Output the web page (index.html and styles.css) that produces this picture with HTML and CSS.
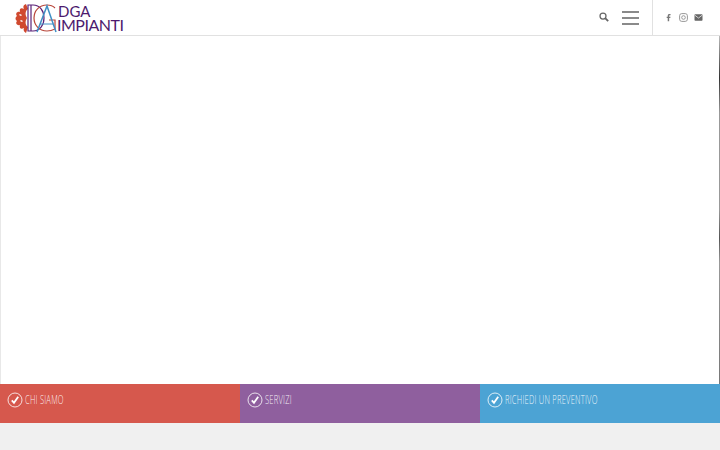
FILE: index.html

```html
<!doctype html>
<html lang="it">
<head>
 <meta charset="utf-8" />
 <meta name="viewport" content="width=device-width, initial-scale=1" />
 <title>DGA Impianti</title>
 <link rel="stylesheet" href="styles.css">
</head>
<body>
 <header class="top">
 <a class="logo" href="#">
 <svg class="mark" width="43" height="32" viewBox="0 0 43 32" aria-hidden="true">
 <path d="M12 2C9 3 9 5 10 7 7 5 5 7 6 10 3 9 1 12 3 14 1 15 1 18 3 19 1 21 3 24 6 23 5 26 7 28 10 26 9 28 10 30 12 31L14 25C11 23 11 19 13 16 11 13 11 9 14 7Z" fill="#d0492f"/>
 <path d="M6 12l2 1-1 1-2-1zM7 18l2 1-1 1-2-1z" fill="#fff"/>
 <path d="M14 3h5c7 0 11 6 11 13s-4 13-11 13h-5zM17 3v26" fill="none" stroke="#5b2278" stroke-width="1.200"/>
 <path d="M41 6c-2-2-5-3-8-3-8 0-13 6-13 13s5 13 13 13c3 0 6-1 8-2v-9h-6" fill="none" stroke="#b8463a" stroke-width="1.200"/>
 <path d="M23 30 33 4 42 30" fill="none" stroke="#3f8fc4" stroke-width="1.500"/>
 <path d="M26 22h13" stroke="#3f8fc4" stroke-width="1"/>
 </svg>
 <span class="brand"><span class="l1">DGA</span><span class="l2">IMPIANTI</span></span>
 </a>
 <div class="actions">
 <svg class="search" width="10" height="10" viewBox="0 0 12 12" aria-hidden="true">
 <circle cx="4.800" cy="4.800" r="3.600" fill="none" stroke="#666" stroke-width="1.500"/>
 <path d="M7.400 7.400 11 11" stroke="#666" stroke-width="2.200"/>
 </svg>
 <div class="burger"><span></span><span></span><span></span></div>
 </div>
 <ul class="social">
 <li><svg width="6" height="9" viewBox="0 0 7 9"><path d="M2 9V5H.8V3.500H2V2.400C2 1 2.800.4 4 .4h1.300v1.500h-.8c-.6 0-.8.2-.8.7v.9h1.500L5 5H3.700v4z" fill="#777"/></svg></li>
 <li><svg width="9" height="9" viewBox="0 0 9 9"><rect x=".6" y=".6" width="7.800" height="7.800" rx="2.200" fill="none" stroke="#999" stroke-width="1"/><circle cx="4.500" cy="4.500" r="1.800" fill="none" stroke="#999" stroke-width="1"/></svg></li>
 <li><svg width="9" height="7" viewBox="0 0 9 7"><rect width="8" height="6.400" x=".5" y=".3" rx=".8" fill="#666"/><path d="M.8 1.200 4.500 4l3.700-2.800" fill="none" stroke="#fff" stroke-width=".7"/></svg></li>
 </ul>
 </header>

 <main class="hero"></main>

 <section class="bands">
 <a class="band red" href="#"><svg class="check" width="16" height="16" viewBox="0 0 16 16"><circle cx="8" cy="8" r="7" fill="none" stroke="#fff" stroke-opacity=".8"/><path d="M4.800 8.300 7 10.800 11.200 4.800" fill="none" stroke="#fff" stroke-width="1.800"/></svg><span>CHI SIAMO</span></a>
 <a class="band purple" href="#"><svg class="check" width="16" height="16" viewBox="0 0 16 16"><circle cx="8" cy="8" r="7" fill="none" stroke="#fff" stroke-opacity=".8"/><path d="M4.800 8.300 7 10.800 11.200 4.800" fill="none" stroke="#fff" stroke-width="1.800"/></svg><span>SERVIZI</span></a>
 <a class="band blue" href="#"><svg class="check" width="16" height="16" viewBox="0 0 16 16"><circle cx="8" cy="8" r="7" fill="none" stroke="#fff" stroke-opacity=".8"/><path d="M4.800 8.300 7 10.800 11.200 4.800" fill="none" stroke="#fff" stroke-width="1.800"/></svg><span>RICHIEDI UN PREVENTIVO</span></a>
 </section>

 <div class="foot"></div>
</body>
</html>
```

FILE: styles.css

```css
*{box-sizing:border-box}
html,body{height:100%}
body{
margin:0;
height:450px;
overflow:hidden;
background:#f0f0f0;
display:flex;
flex-direction:column;
font-family:"Open Sans","Liberation Sans",Arial,sans-serif;
}
a{text-decoration:none;color:inherit}
ul{list-style:none;margin:0;padding:0}

.top{
height:36px;
flex:none;
display:flex;
align-items:stretch;
background:#fff;
border-bottom:1px solid #e1e1e1;
}
.logo{display:flex;align-items:center;padding-left:14px;margin-right:auto}
.mark{display:block}
.brand{display:flex;flex-direction:column;color:#4d1a6e;font-family:Lato,sans-serif;line-height:14px}
.brand .l1{font-size:15px;padding-left:1px}
.brand .l2{font-size:16px;letter-spacing:-.5px}

.actions{display:flex;align-items:center;gap:13px;padding-right:13px}
.search{display:block;margin-top:-1px}
.burger{width:17px;display:flex;flex-direction:column;gap:4px}
.burger span{display:block;height:2px;background:#8a8a8a}
.social{
width:68px;
border-left:1px solid #e1e1e1;
display:flex;
align-items:center;
justify-content:flex-end;
gap:6px;
padding-right:17px;
}
.social li{display:flex;width:9px;justify-content:center}

.hero{
height:348px;
flex:none;
border-left:1px solid #e8e8e8;
background:linear-gradient(180deg,#bbb,#333 12%,#999 22%,#999 50%,#555 58%,#999 65%,#777) right top/1px 100% no-repeat,#fff;
}

.bands{display:flex;height:39px;flex:none}
.band{
flex:1;
display:flex;
align-items:flex-start;
gap:2px;
padding:8px 0 0 7px;
color:rgba(255,255,255,.9);
font-size:13px;
}
.band span{line-height:15px;font-weight:300;letter-spacing:.4px;transform:scaleX(.58);transform-origin:left center;white-space:nowrap}
.check{display:block;flex:none}
.red{background:#d6584d}
.purple{background:#8f5f9e}
.blue{background:#4ca3d4}

.foot{flex:1;background:#f0f0f0}
```
